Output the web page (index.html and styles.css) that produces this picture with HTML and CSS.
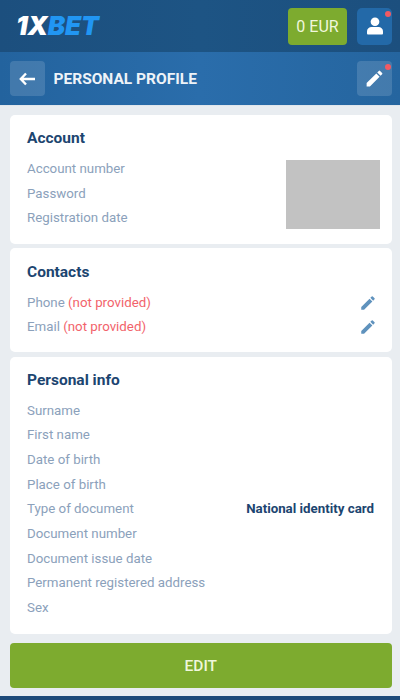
FILE: index.html
```html
<!DOCTYPE html>
<html lang="en">
<head>
<meta charset="utf-8">
<title>Personal profile</title>
<link rel="stylesheet" href="styles.css">
</head>
<body>
<header class="topbar">
  <div class="logo"><span class="logo-x">1X</span><span class="logo-bet">BET</span></div>
  <div class="top-actions">
    <div class="balance">0 EUR</div>
    <div class="user-btn">
      <svg class="user-icon" viewBox="0 0 18 20"><circle cx="9" cy="5.2" r="4.9" fill="#fff"/><path d="M1 19.5c-.6 0-1-.4-1-1v-2.600c0-3 2.500-4.900 5-4.900h8c2.500 0 5 1.900 5 4.900v2.600c0 .6-.4 1-1 1z" fill="#fff"/></svg>
      <span class="dot"></span>
    </div>
  </div>
</header>
<div class="subbar">
  <div class="sub-left">
    <div class="square-btn">
      <svg class="back-icon" viewBox="0 0 16 14"><path d="M7 1.500 1.800 7 7 12.500M2 7h14" fill="none" stroke="#fff" stroke-width="2.400"/></svg>
    </div>
    <h1 class="page-title">PERSONAL PROFILE</h1>
  </div>
  <div class="square-btn">
    <svg class="pen-white" viewBox="0 0 24 24"><path d="M3 17.250V21h3.750L17.810 9.940l-3.750-3.750zM20.710 7.040a1 1 0 0 0 0-1.410l-2.340-2.340a1 1 0 0 0-1.410 0l-1.830 1.830 3.750 3.750z" fill="#fff"/></svg>
    <span class="dot"></span>
  </div>
</div>
<main class="content">
  <section class="card card-account">
    <h2 class="card-title">Account</h2>
    <div class="account-body">
      <div class="rows">
        <div class="row">Account number</div>
        <div class="row">Password</div>
        <div class="row">Registration date</div>
      </div>
      <div class="redacted"></div>
    </div>
  </section>
  <section class="card card-contacts">
    <h2 class="card-title">Contacts</h2>
    <div class="row row-edit"><span>Phone <span class="missing">(not provided)</span></span>
      <svg class="pen-blue" viewBox="0 0 24 24"><path d="M3 17.250V21h3.750L17.810 9.940l-3.750-3.750zM20.710 7.040a1 1 0 0 0 0-1.410l-2.340-2.340a1 1 0 0 0-1.410 0l-1.830 1.830 3.750 3.750z"/></svg></div>
    <div class="row row-edit"><span>Email <span class="missing">(not provided)</span></span>
      <svg class="pen-blue" viewBox="0 0 24 24"><path d="M3 17.250V21h3.750L17.810 9.940l-3.750-3.750zM20.710 7.040a1 1 0 0 0 0-1.410l-2.340-2.340a1 1 0 0 0-1.410 0l-1.830 1.830 3.750 3.750z"/></svg></div>
  </section>
  <section class="card card-personal">
    <h2 class="card-title">Personal info</h2>
    <div class="row">Surname</div>
    <div class="row">First name</div>
    <div class="row">Date of birth</div>
    <div class="row">Place of birth</div>
    <div class="row row-value"><span>Type of document</span><strong class="value">National identity card</strong></div>
    <div class="row">Document number</div>
    <div class="row">Document issue date</div>
    <div class="row">Permanent registered address</div>
    <div class="row">Sex</div>
  </section>
  <button class="edit-btn" type="button">EDIT</button>
</main>
<div class="footer-strip"></div>
</body>
</html>
```
FILE: styles.css
```css
* { box-sizing: border-box; }
html, body { margin: 0; height: 700px; overflow: hidden; }
body {
  width: 400px;
  background: #e9edf1;
  font-family: Roboto, "Liberation Sans", sans-serif;
  color: #8ba1bb;
  display: flex;
  flex-direction: column;
}
.topbar {
  height: 52px;
  background: linear-gradient(90deg, #1c4f7e, #1d5484 50%, #1c4f7e);
  display: flex;
  align-items: center;
  justify-content: space-between;
  padding: 0 8px 0 16px;
}
.logo {
  font-family: Inter, Roboto, sans-serif;
  font-size: 26px;
  font-weight: 900;
  font-style: italic;
  letter-spacing: -.2px;
  line-height: 1;
  margin-top: -1px;
}
.logo-x { color: #fff; }
.logo-bet { color: #2196f3; }
.top-actions { display: flex; gap: 10px; align-items: center; }
.balance {
  width: 59px;
  height: 37px;
  border-radius: 4px;
  background: #7dab2f;
  color: #f0f7dc;
  font-size: 16px;
  display: flex;
  align-items: center;
  justify-content: center;
}
.user-btn {
  position: relative;
  width: 35px;
  height: 37px;
  border-radius: 5px;
  background: #2369a8;
  display: flex;
  align-items: center;
  justify-content: center;
}
.user-icon { width: 16px; height: 18px; }
.dot {
  position: absolute;
  top: 3px;
  right: 1px;
  width: 6px;
  height: 6px;
  border-radius: 50%;
  background: #f15a63;
}
.subbar {
  height: 54px;
  background: linear-gradient(90deg, #23639e, #2a6dab 50%, #25659f);
  display: flex;
  align-items: center;
  justify-content: space-between;
  padding: 0 8px 0 9.500px;
  border-bottom: 1px solid #e0e6ec;
}
.sub-left { display: flex; align-items: center; gap: 9px; }
.square-btn {
  position: relative;
  width: 35px;
  height: 35px;
  border-radius: 4px;
  background: rgba(255, 255, 255, .14);
  display: flex;
  align-items: center;
  justify-content: center;
}
.back-icon { width: 16px; height: 14px; }
.pen-white { width: 21px; height: 21px; }
.page-title {
  margin: 0;
  color: #eef3f8;
  font-size: 15.500px;
  font-weight: 700;
}
.content {
  flex: 1;
  padding: 9px 8px 0 9.500px;
  display: flex;
  flex-direction: column;
}
.card {
  background: #fff;
  border-radius: 5px;
  padding: 0 18px 0 17.500px;
}
.card-account { height: 129px; }
.card-contacts { height: 104px; margin-top: 4px; }
.card-personal { height: 277px; margin-top: 5px; }
.card-title {
  margin: 0;
  height: 42px;
  padding-top: 13px;
  line-height: 20px;
  font-size: 15.500px;
  font-weight: 700;
  color: #1c4570;
}
.card-contacts .card-title { height: 42.500px; padding-top: 13.500px; }
.card-personal .card-title { height: 41.500px; padding-top: 12.500px; }
.row {
  height: 24.700px;
  line-height: 24.700px;
  font-size: 13.300px;
  color: #8ba1bb;
}
.account-body { display: flex; justify-content: space-between; }
.account-body .row { height: 24.700px; line-height: 24.700px; }
.redacted {
  width: 94px;
  height: 69px;
  margin: 3px -5.500px 0 0;
  background: #c2c2c2;
}
.card-contacts .row { height: 24px; line-height: 24px; }
.row-edit, .row-value { display: flex; justify-content: space-between; align-items: center; }
.missing { color: #f2636b; }
.pen-blue { width: 18px; height: 18px; fill: #5f92bd; margin-right: -2.500px; }
.value { color: #1c4570; font-weight: 700; font-size: 13.300px; }
.edit-btn {
  margin-top: 9px;
  height: 45px;
  border: 0;
  border-radius: 4px;
  background: #7dab2f;
  color: #f0f7dc;
  font-family: inherit;
  font-size: 15.500px;
  font-weight: 500;
}
.footer-strip { height: 4px; background: #1d4a79; }
```
